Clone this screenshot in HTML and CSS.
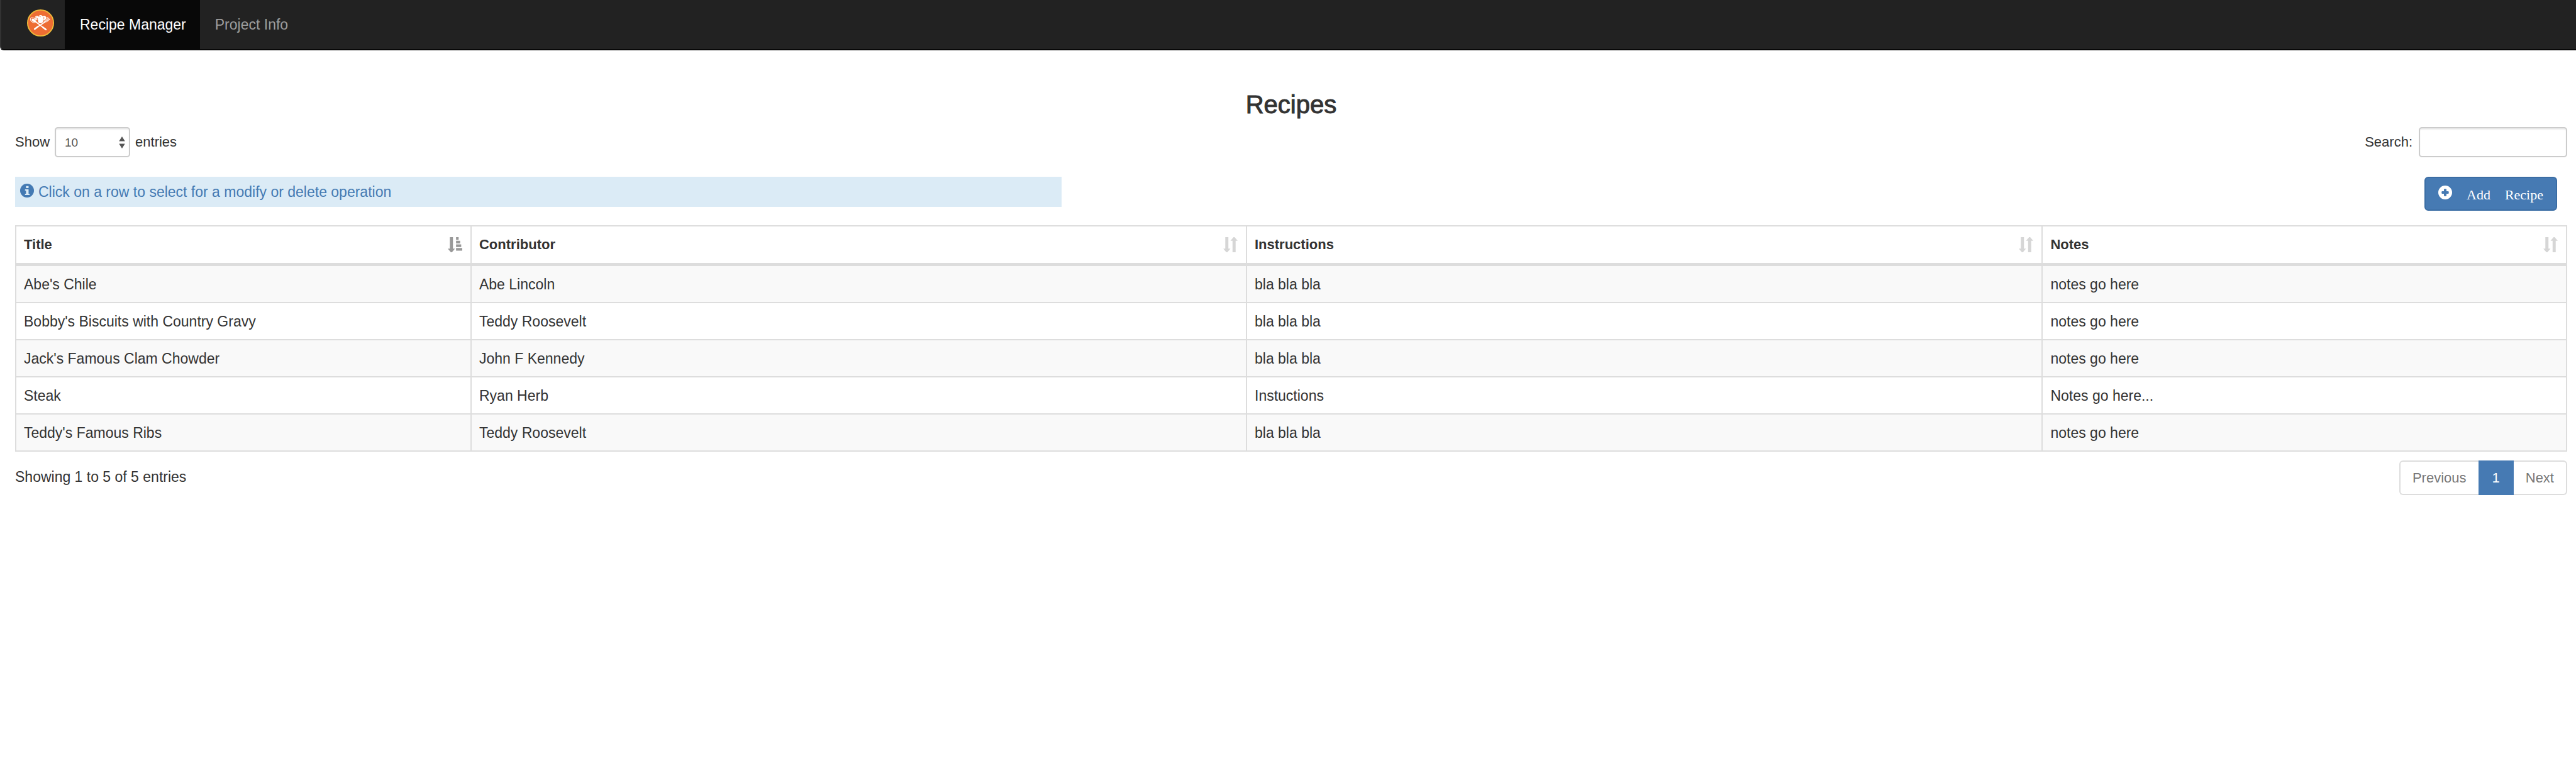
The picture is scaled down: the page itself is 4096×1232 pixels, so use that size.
FILE: index.html
```html
<!DOCTYPE html>
<html lang="en">
<head>
<meta charset="utf-8">
<title>Recipe Manager</title>
<link rel="stylesheet" href="styles.css">
</head>
<body>
<svg class="sprite" aria-hidden="true">
  <symbol id="sort-both" viewBox="0 0 28 29">
    <path d="M4 0h6v22h4L8 29H6L0 22h4zM20 0h2l6 7h-4v22h-6V7h-4z"/>
  </symbol>
  <symbol id="sort-asc" viewBox="0 0 28 29">
    <path d="M4 0h6v22h4L8 29H6L0 22h4zM16 0h5v5h-5zM16 7h8v5h-8zM16 14h10v5H16zM16 21h12v5H16z"/>
  </symbol>
</svg>
<nav class="navbar">
  <a class="brand" href="#" aria-label="Home">
    <svg class="logo" viewBox="0 0 53 53">
      <circle cx="26.5" cy="26.5" r="25.4" fill="#ed6d33" stroke="#f0bd3a" stroke-width="2.2"/>
      <path d="M21.500 27V20a4 4 0 1 1 0.500-6.500a5 4 0 0 1 9 0a4 4 0 1 1 0.500 6.500V27z" fill="#fff"/>
      <path d="M20.500 20.500v-3.500M18.500 14.500c-2.500.5-2 3.500 0 4M22 14c2-2 4-1 4.500 1M32 15c2 .5 2 3 0 3.500" fill="none" stroke="#ed6d33"/>
      <path d="M17 24L37 40M36 24L16 38.500" stroke="#ed6d33" stroke-width="4.500"/>
      <path d="M16 23.500L37 39.500M36 24L15 38" stroke="#fff" stroke-width="2.200" stroke-linecap="round"/>
      <path d="M31 35l6 4.500M21 34l-6 4.500" stroke="#fff" stroke-width="3" stroke-linecap="round"/>
      <ellipse cx="12" cy="21" rx="6" ry="4" transform="rotate(38 12 21)" fill="none" stroke="#fff" stroke-width="1.200"/>
      <ellipse cx="13" cy="21.500" rx="4.500" ry="2.600" transform="rotate(38 13 21.500)" fill="#fff"/>
      <path d="M34 24.500c-1.500-3-.5-4.500 1-5.500l6-4M36 22.500l7.500-5M35.500 24c3 1 4.500 0 5.500-1l4-4M36 21.500l6.500-5M37 23.500l7.500-5" fill="none" stroke="#fff" stroke-width="1.100"/>
    </svg>
  </a>
  <a class="nav-link active" href="#">Recipe Manager</a>
  <a class="nav-link" href="#">Project Info</a>
</nav>
<main class="content">
  <h1 class="page-title">Recipes</h1>
  <div class="controls">
    <label class="length">Show
      <span class="select-wrap">
        <select class="field length-select"><option>10</option><option>25</option><option>50</option></select>
        <svg class="arrows" viewBox="0 0 10 20"><path d="M5 0l5 8H0zM0 12h10l-5 8z"/></svg>
      </span>
      entries</label>
    <label class="search">Search: <input class="field search-input" type="search"></label>
  </div>
  <div class="actions">
    <div class="hint">
      <svg class="glyph hint-glyph" viewBox="0 0 27 27">
        <circle cx="13.500" cy="13.500" r="13.500" fill="#447ab3"/>
        <path d="M11.500 4.500h5v4h-5zM9.500 11h7v8.500h2v2.500h-9v-2.500h2v-6h-2z" fill="#dbebf6"/>
      </svg>
      <span>Click on a row to select for a modify or delete operation</span>
    </div>
    <button class="add" type="button">
      <svg class="glyph add-glyph" viewBox="0 0 27 27">
        <path fill="#fff" fill-rule="evenodd" d="M13.500 0a13.500 13.500 0 1 1 0 27a13.500 13.500 0 1 1 0-27zM12 6.500l-1 1v3.500H7.500l-1 1v3l1 1H11v3.500l1 1h3l1-1V16h3.500l1-1v-3l-1-1H16V7.500l-1-1z"/>
      </svg>
      <span>Add</span><span>Recipe</span>
    </button>
  </div>
  <table class="recipes">
    <colgroup><col class="col-title"><col class="col-contributor"><col class="col-instructions"><col></colgroup>
    <thead>
      <tr>
        <th><div class="head">Title<svg class="sort sorted"><use href="#sort-asc"/></svg></div></th>
        <th><div class="head">Contributor<svg class="sort"><use href="#sort-both"/></svg></div></th>
        <th><div class="head">Instructions<svg class="sort"><use href="#sort-both"/></svg></div></th>
        <th><div class="head">Notes<svg class="sort"><use href="#sort-both"/></svg></div></th>
      </tr>
    </thead>
    <tbody>
      <tr><td>Abe's Chile</td><td>Abe Lincoln</td><td>bla bla bla</td><td>notes go here</td></tr>
      <tr><td>Bobby's Biscuits with Country Gravy</td><td>Teddy Roosevelt</td><td>bla bla bla</td><td>notes go here</td></tr>
      <tr><td>Jack's Famous Clam Chowder</td><td>John F Kennedy</td><td>bla bla bla</td><td>notes go here</td></tr>
      <tr><td>Steak</td><td>Ryan Herb</td><td>Instuctions</td><td>Notes go here...</td></tr>
      <tr><td>Teddy's Famous Ribs</td><td>Teddy Roosevelt</td><td>bla bla bla</td><td>notes go here</td></tr>
    </tbody>
  </table>
  <div class="footer">
    <div class="status">Showing 1 to 5 of 5 entries</div>
    <div class="pagination">
      <a class="page first" href="#">Previous</a>
      <a class="page current" href="#">1</a>
      <a class="page last" href="#">Next</a>
    </div>
  </div>
</main>
</body>
</html>
```
FILE: styles.css
```css
* { box-sizing: border-box; }
body {
  margin: 0;
  background: #fff;
  color: #333;
  font: 22px/32px "Liberation Sans", Arial, sans-serif;
}
a { text-decoration: none; }
svg { display: block; flex: none; }
.sprite { position: absolute; width: 0; height: 0; }

.navbar {
  display: flex;
  height: 80px;
  background: #222;
  border-bottom: 2px solid #080808;
  border-left: 2px solid #333;
  border-bottom-left-radius: 6px;
}
.brand { padding: 15px 17px 0 41px; }
.logo { width: 43px; height: 43px; }
.nav-link {
  padding: 23px 22px 23px 24px;
  color: #9d9d9d;
  font-size: 23px;
}
.nav-link.active { background: #080808; color: #fff; }

.content { padding: 64px 14px 0 24px; }
.page-title {
  margin: 0 0 14px;
  font-size: 40px;
  line-height: 44px;
  font-weight: 400;
  text-align: center;
  -webkit-text-stroke: 1px #333;
}
.controls { display: flex; justify-content: space-between; }
.length { display: flex; align-items: center; gap: 8px; }
.search { display: flex; align-items: center; gap: 10px; }
.field {
  height: 48px;
  margin: 0;
  border: 2px solid #ccc;
  border-radius: 5px;
  background: #fff;
  color: #555;
  font: 19px "Liberation Sans", Arial, sans-serif;
  box-shadow: inset 0 2px 2px rgba(0, 0, 0, 0.08);
  appearance: none;
}
.select-wrap { position: relative; }
.length-select { display: block; width: 120px; padding: 0 14px; }
.arrows {
  position: absolute;
  right: 8px;
  top: 15px;
  width: 10px;
  height: 19px;
  fill: #555;
  pointer-events: none;
}
.search-input { width: 236px; padding: 0 12px; }

.actions {
  display: flex;
  justify-content: space-between;
  align-items: flex-start;
  margin: 31px 0 23px;
}
.hint {
  display: flex;
  align-items: center;
  gap: 7px;
  width: 41%;
  height: 48px;
  padding: 0 8px;
  background: #dbebf6;
  color: #447ab3;
  font-size: 23px;
}
.glyph { width: 22px; height: 22px; }
.hint-glyph { margin-bottom: 4px; }
.add {
  display: flex;
  align-items: center;
  gap: 23px;
  height: 54px;
  margin-right: 16px;
  padding: 3px 20px 0;
  border: 2px solid #3b6da4;
  border-radius: 6px;
  background: #467ab3;
  color: #fff;
  font: 22px/32px "Liberation Serif", "Times New Roman", serif;
}
.add-glyph { margin-bottom: 7px; }

.recipes {
  width: 100%;
  table-layout: fixed;
  border-collapse: separate;
  border-spacing: 0;
  border-top: 2px solid #ddd;
  border-left: 2px solid #ddd;
}
.col-title { width: 17.85%; }
.col-contributor { width: 30.4%; }
.col-instructions { width: 31.2%; }
.recipes th {
  padding: 13px 13px 13px 12px;
  border-right: 2px solid #ddd;
  border-bottom: 5px solid #ddd;
  text-align: left;
}
.recipes td {
  padding: 13px 12px 12px;
  border-right: 2px solid #ddd;
  border-bottom: 2px solid #ddd;
  font-size: 23px;
}
.recipes tbody tr:nth-child(odd) { background: #f9f9f9; }
.head { display: flex; justify-content: space-between; align-items: center; }
.sort { width: 23px; height: 24px; fill: #d6d6d6; }
.sorted { fill: #999; }

.footer {
  display: flex;
  justify-content: space-between;
  margin-top: 14px;
}
.status { padding-top: 10px; font-size: 23px; }
.pagination { display: flex; }
.page {
  padding: 10px 19px 9px;
  border: 2px solid #ddd;
  color: #777;
}
.first { border-right: 0; border-radius: 6px 0 0 6px; }
.last { border-left: 0; border-radius: 0 6px 6px 0; }
.current {
  padding: 10px 20px 9px;
  background: #467ab3;
  border-color: #467ab3;
  color: #fff;
}
```
